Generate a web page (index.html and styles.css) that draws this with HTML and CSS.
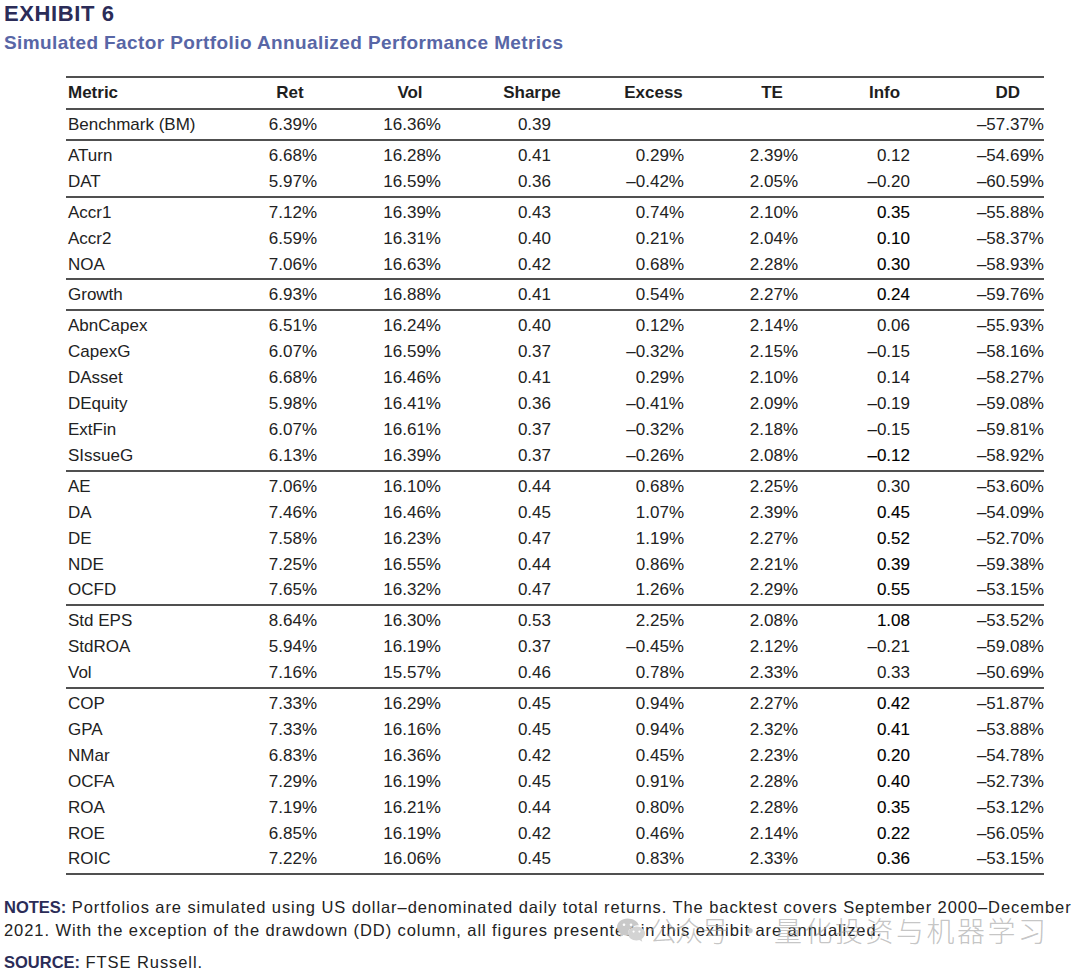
FILE: index.html
```html
<!DOCTYPE html>
<html lang="en">
<head>
<meta charset="utf-8">
<title>Exhibit 6</title>
<link rel="stylesheet" href="styles.css">
</head>
<body>
<div class="page">
  <h1 class="exhibit">EXHIBIT 6</h1>
  <h2 class="subtitle">Simulated Factor Portfolio Annualized Performance Metrics</h2>

  <table class="metrics">
    <colgroup>
      <col class="c-metric"><col class="c-ret"><col class="c-vol"><col class="c-sharpe"><col class="c-excess"><col class="c-te"><col class="c-info"><col class="c-dd">
    </colgroup>
    <thead>
      <tr><th class="metric">Metric</th><th class="ret">Ret</th><th class="vol">Vol</th><th class="sharpe">Sharpe</th><th class="excess">Excess</th><th class="te">TE</th><th class="info">Info</th><th class="dd">DD</th></tr>
    </thead>
    <tbody>
      <tr><td class="metric">Benchmark (BM)</td><td class="ret">6.39%</td><td class="vol">16.36%</td><td class="sharpe">0.39</td><td class="excess"></td><td class="te"></td><td class="info"></td><td class="dd">–57.37%</td></tr>
    </tbody>
    <tbody>
      <tr><td class="metric">ATurn</td><td class="ret">6.68%</td><td class="vol">16.28%</td><td class="sharpe">0.41</td><td class="excess">0.29%</td><td class="te">2.39%</td><td class="info">0.12</td><td class="dd">–54.69%</td></tr>
      <tr><td class="metric">DAT</td><td class="ret">5.97%</td><td class="vol">16.59%</td><td class="sharpe">0.36</td><td class="excess">–0.42%</td><td class="te">2.05%</td><td class="info">–0.20</td><td class="dd">–60.59%</td></tr>
    </tbody>
    <tbody>
      <tr><td class="metric">Accr1</td><td class="ret">7.12%</td><td class="vol">16.39%</td><td class="sharpe">0.43</td><td class="excess">0.74%</td><td class="te">2.10%</td><td class="info strong">0.35</td><td class="dd">–55.88%</td></tr>
      <tr><td class="metric">Accr2</td><td class="ret">6.59%</td><td class="vol">16.31%</td><td class="sharpe">0.40</td><td class="excess">0.21%</td><td class="te">2.04%</td><td class="info strong">0.10</td><td class="dd">–58.37%</td></tr>
      <tr><td class="metric">NOA</td><td class="ret">7.06%</td><td class="vol">16.63%</td><td class="sharpe">0.42</td><td class="excess">0.68%</td><td class="te">2.28%</td><td class="info strong">0.30</td><td class="dd">–58.93%</td></tr>
    </tbody>
    <tbody>
      <tr><td class="metric">Growth</td><td class="ret">6.93%</td><td class="vol">16.88%</td><td class="sharpe">0.41</td><td class="excess">0.54%</td><td class="te">2.27%</td><td class="info strong">0.24</td><td class="dd">–59.76%</td></tr>
    </tbody>
    <tbody>
      <tr><td class="metric">AbnCapex</td><td class="ret">6.51%</td><td class="vol">16.24%</td><td class="sharpe">0.40</td><td class="excess">0.12%</td><td class="te">2.14%</td><td class="info">0.06</td><td class="dd">–55.93%</td></tr>
      <tr><td class="metric">CapexG</td><td class="ret">6.07%</td><td class="vol">16.59%</td><td class="sharpe">0.37</td><td class="excess">–0.32%</td><td class="te">2.15%</td><td class="info">–0.15</td><td class="dd">–58.16%</td></tr>
      <tr><td class="metric">DAsset</td><td class="ret">6.68%</td><td class="vol">16.46%</td><td class="sharpe">0.41</td><td class="excess">0.29%</td><td class="te">2.10%</td><td class="info">0.14</td><td class="dd">–58.27%</td></tr>
      <tr><td class="metric">DEquity</td><td class="ret">5.98%</td><td class="vol">16.41%</td><td class="sharpe">0.36</td><td class="excess">–0.41%</td><td class="te">2.09%</td><td class="info">–0.19</td><td class="dd">–59.08%</td></tr>
      <tr><td class="metric">ExtFin</td><td class="ret">6.07%</td><td class="vol">16.61%</td><td class="sharpe">0.37</td><td class="excess">–0.32%</td><td class="te">2.18%</td><td class="info">–0.15</td><td class="dd">–59.81%</td></tr>
      <tr><td class="metric">SIssueG</td><td class="ret">6.13%</td><td class="vol">16.39%</td><td class="sharpe">0.37</td><td class="excess">–0.26%</td><td class="te">2.08%</td><td class="info strong">–0.12</td><td class="dd">–58.92%</td></tr>
    </tbody>
    <tbody>
      <tr><td class="metric">AE</td><td class="ret">7.06%</td><td class="vol">16.10%</td><td class="sharpe">0.44</td><td class="excess">0.68%</td><td class="te">2.25%</td><td class="info">0.30</td><td class="dd">–53.60%</td></tr>
      <tr><td class="metric">DA</td><td class="ret">7.46%</td><td class="vol">16.46%</td><td class="sharpe">0.45</td><td class="excess">1.07%</td><td class="te">2.39%</td><td class="info strong">0.45</td><td class="dd">–54.09%</td></tr>
      <tr><td class="metric">DE</td><td class="ret">7.58%</td><td class="vol">16.23%</td><td class="sharpe">0.47</td><td class="excess">1.19%</td><td class="te">2.27%</td><td class="info strong">0.52</td><td class="dd">–52.70%</td></tr>
      <tr><td class="metric">NDE</td><td class="ret">7.25%</td><td class="vol">16.55%</td><td class="sharpe">0.44</td><td class="excess">0.86%</td><td class="te">2.21%</td><td class="info strong">0.39</td><td class="dd">–59.38%</td></tr>
      <tr><td class="metric">OCFD</td><td class="ret">7.65%</td><td class="vol">16.32%</td><td class="sharpe">0.47</td><td class="excess">1.26%</td><td class="te">2.29%</td><td class="info strong">0.55</td><td class="dd">–53.15%</td></tr>
    </tbody>
    <tbody>
      <tr><td class="metric">Std EPS</td><td class="ret">8.64%</td><td class="vol">16.30%</td><td class="sharpe">0.53</td><td class="excess">2.25%</td><td class="te">2.08%</td><td class="info strong">1.08</td><td class="dd">–53.52%</td></tr>
      <tr><td class="metric">StdROA</td><td class="ret">5.94%</td><td class="vol">16.19%</td><td class="sharpe">0.37</td><td class="excess">–0.45%</td><td class="te">2.12%</td><td class="info">–0.21</td><td class="dd">–59.08%</td></tr>
      <tr><td class="metric">Vol</td><td class="ret">7.16%</td><td class="vol">15.57%</td><td class="sharpe">0.46</td><td class="excess">0.78%</td><td class="te">2.33%</td><td class="info">0.33</td><td class="dd">–50.69%</td></tr>
    </tbody>
    <tbody>
      <tr><td class="metric">COP</td><td class="ret">7.33%</td><td class="vol">16.29%</td><td class="sharpe">0.45</td><td class="excess">0.94%</td><td class="te">2.27%</td><td class="info strong">0.42</td><td class="dd">–51.87%</td></tr>
      <tr><td class="metric">GPA</td><td class="ret">7.33%</td><td class="vol">16.16%</td><td class="sharpe">0.45</td><td class="excess">0.94%</td><td class="te">2.32%</td><td class="info strong">0.41</td><td class="dd">–53.88%</td></tr>
      <tr><td class="metric">NMar</td><td class="ret">6.83%</td><td class="vol">16.36%</td><td class="sharpe">0.42</td><td class="excess">0.45%</td><td class="te">2.23%</td><td class="info strong">0.20</td><td class="dd">–54.78%</td></tr>
      <tr><td class="metric">OCFA</td><td class="ret">7.29%</td><td class="vol">16.19%</td><td class="sharpe">0.45</td><td class="excess">0.91%</td><td class="te">2.28%</td><td class="info strong">0.40</td><td class="dd">–52.73%</td></tr>
      <tr><td class="metric">ROA</td><td class="ret">7.19%</td><td class="vol">16.21%</td><td class="sharpe">0.44</td><td class="excess">0.80%</td><td class="te">2.28%</td><td class="info strong">0.35</td><td class="dd">–53.12%</td></tr>
      <tr><td class="metric">ROE</td><td class="ret">6.85%</td><td class="vol">16.19%</td><td class="sharpe">0.42</td><td class="excess">0.46%</td><td class="te">2.14%</td><td class="info strong">0.22</td><td class="dd">–56.05%</td></tr>
      <tr><td class="metric">ROIC</td><td class="ret">7.22%</td><td class="vol">16.06%</td><td class="sharpe">0.45</td><td class="excess">0.83%</td><td class="te">2.33%</td><td class="info strong">0.36</td><td class="dd">–53.15%</td></tr>
    </tbody>
  </table>

  <div class="notes">
    <p class="note"><span class="label">NOTES:</span> Portfolios are simulated using US dollar–denominated daily total returns. The backtest covers September 2000–December 2021. With the exception of the drawdown (DD) column, all figures presented in this exhibit are annualized.</p>
    <p class="source"><span class="label">SOURCE:</span> FTSE Russell.</p>
    <div class="watermark">
      <svg class="wm-icon" viewBox="0 0 30 26" width="30" height="26" aria-hidden="true">
        <path d="M11.5 1.5C5.7 1.5 1 5.4 1 10.2c0 2.7 1.5 5.1 3.8 6.7L3.9 20l3.6-1.9c1.2.4 2.6.6 4 .6.3 0 .6 0 .9 0-.2-.7-.3-1.4-.3-2.100 0-4.6 4.4-8.3 9.9-8.3.3 0 .6 0 .9 0C21.8 4.4 17.1 1.5 11.5 1.5z" fill="#c9c9c9"/>
        <path d="M29 16.6c0-3.9-3.8-7-8.5-7s-8.5 3.1-8.5 7 3.8 7 8.5 7c1 0 2-.2 2.9-.5l2.9 1.6-.8-2.6c2-1.3 3.5-3.3 3.5-5.5z" fill="#d3d3d3"/>
        <circle cx="8" cy="7.8" r="1.3" fill="#fff"/>
        <circle cx="15" cy="7.8" r="1.3" fill="#fff"/>
        <circle cx="17.6" cy="14.6" r="1.1" fill="#fff"/>
        <circle cx="23.4" cy="14.6" r="1.1" fill="#fff"/>
      </svg>
      <span class="wm-a">公众号</span>
      <span class="wm-dot">·</span>
      <span class="wm-b">量化投资与机器学习</span>
    </div>
  </div>
</div>
</body>
</html>
```

FILE: styles.css
```css
html, body {
  margin: 0;
  padding: 0;
  background: #ffffff;
}

body {
  font-family: "Liberation Sans", Arial, sans-serif;
  color: #222222;
}

.page {
  width: 1080px;
  padding: 3px 0 0 4px;
  box-sizing: border-box;
}

.exhibit {
  margin: 0;
  font-size: 22px;
  line-height: 22px;
  font-weight: bold;
  color: #2b2c58;
  letter-spacing: 0.6px;
}

.subtitle {
  margin: 7px 0 0 0;
  font-size: 19px;
  line-height: 22px;
  font-weight: bold;
  color: #5866a6;
  letter-spacing: 0.4px;
}

.metrics {
  margin: 22px 0 0 62px;
  width: 978px;
  table-layout: fixed;
  border-collapse: collapse;
  font-size: 17px;
}

.c-metric { width: 169px; }
.c-ret { width: 110px; }
.c-vol { width: 130px; }
.c-sharpe { width: 114px; }
.c-excess { width: 129px; }
.c-te { width: 108px; }
.c-info { width: 117px; }
.c-dd { width: 101px; }

.metrics thead tr {
  border-top: 2px solid #505050;
  border-bottom: 2px solid #505050;
}

.metrics th {
  height: 30px;
  padding: 0;
  font-weight: bold;
  color: #1e1e1e;
  text-align: center;
  line-height: 30px;
}

.metrics th.metric { text-align: left; padding-left: 2px; }
.metrics th.dd { text-align: right; padding-right: 24px; }

.metrics tbody {
  border-bottom: 2px solid #505050;
}

.metrics td {
  padding: 0;
  height: 25.9px;
  line-height: 25.9px;
  text-align: right;
  white-space: nowrap;
}

.metrics tbody tr:first-child td { padding-top: 2px; }
.metrics tbody tr:last-child td { padding-bottom: 1px; }

.metrics td.metric { text-align: left; padding-left: 2px; }
.metrics td.ret { padding-right: 28px; }
.metrics td.vol { padding-right: 34px; }
.metrics td.sharpe { padding-right: 38px; }
.metrics td.excess { padding-right: 34px; }
.metrics td.te { padding-right: 28px; }
.metrics td.info { padding-right: 33px; color: #1a1a1a; }
.metrics td.info.strong { color: #000000; -webkit-text-stroke: 0.12px #000000; }
.metrics td.dd { padding-right: 0; }

.notes {
  position: relative;
  margin-top: 21px;
  width: 1076px;
  font-size: 16.5px;
  letter-spacing: 0.92px;
  color: #222222;
}

.note {
  margin: 0;
  line-height: 23px;
}

.source {
  margin: 9px 0 0 0;
  line-height: 23px;
}

.label {
  font-weight: bold;
  color: #2b2c58;
  letter-spacing: 0;
}

.watermark {
  position: absolute;
  left: 612px;
  top: 19px;
  display: flex;
  align-items: center;
  pointer-events: none;
  font-family: "Noto Sans CJK SC", sans-serif;
  font-weight: 300;
  font-size: 28px;
  line-height: 30px;
  letter-spacing: 0;
  color: rgba(160, 160, 160, 0.62);
}

.wm-icon {
  margin-right: 3px;
}

.wm-a {
  letter-spacing: -2px;
}

.wm-dot {
  margin: 0 10px 0 9px;
}

.wm-b {
  letter-spacing: 2.5px;
}
```
